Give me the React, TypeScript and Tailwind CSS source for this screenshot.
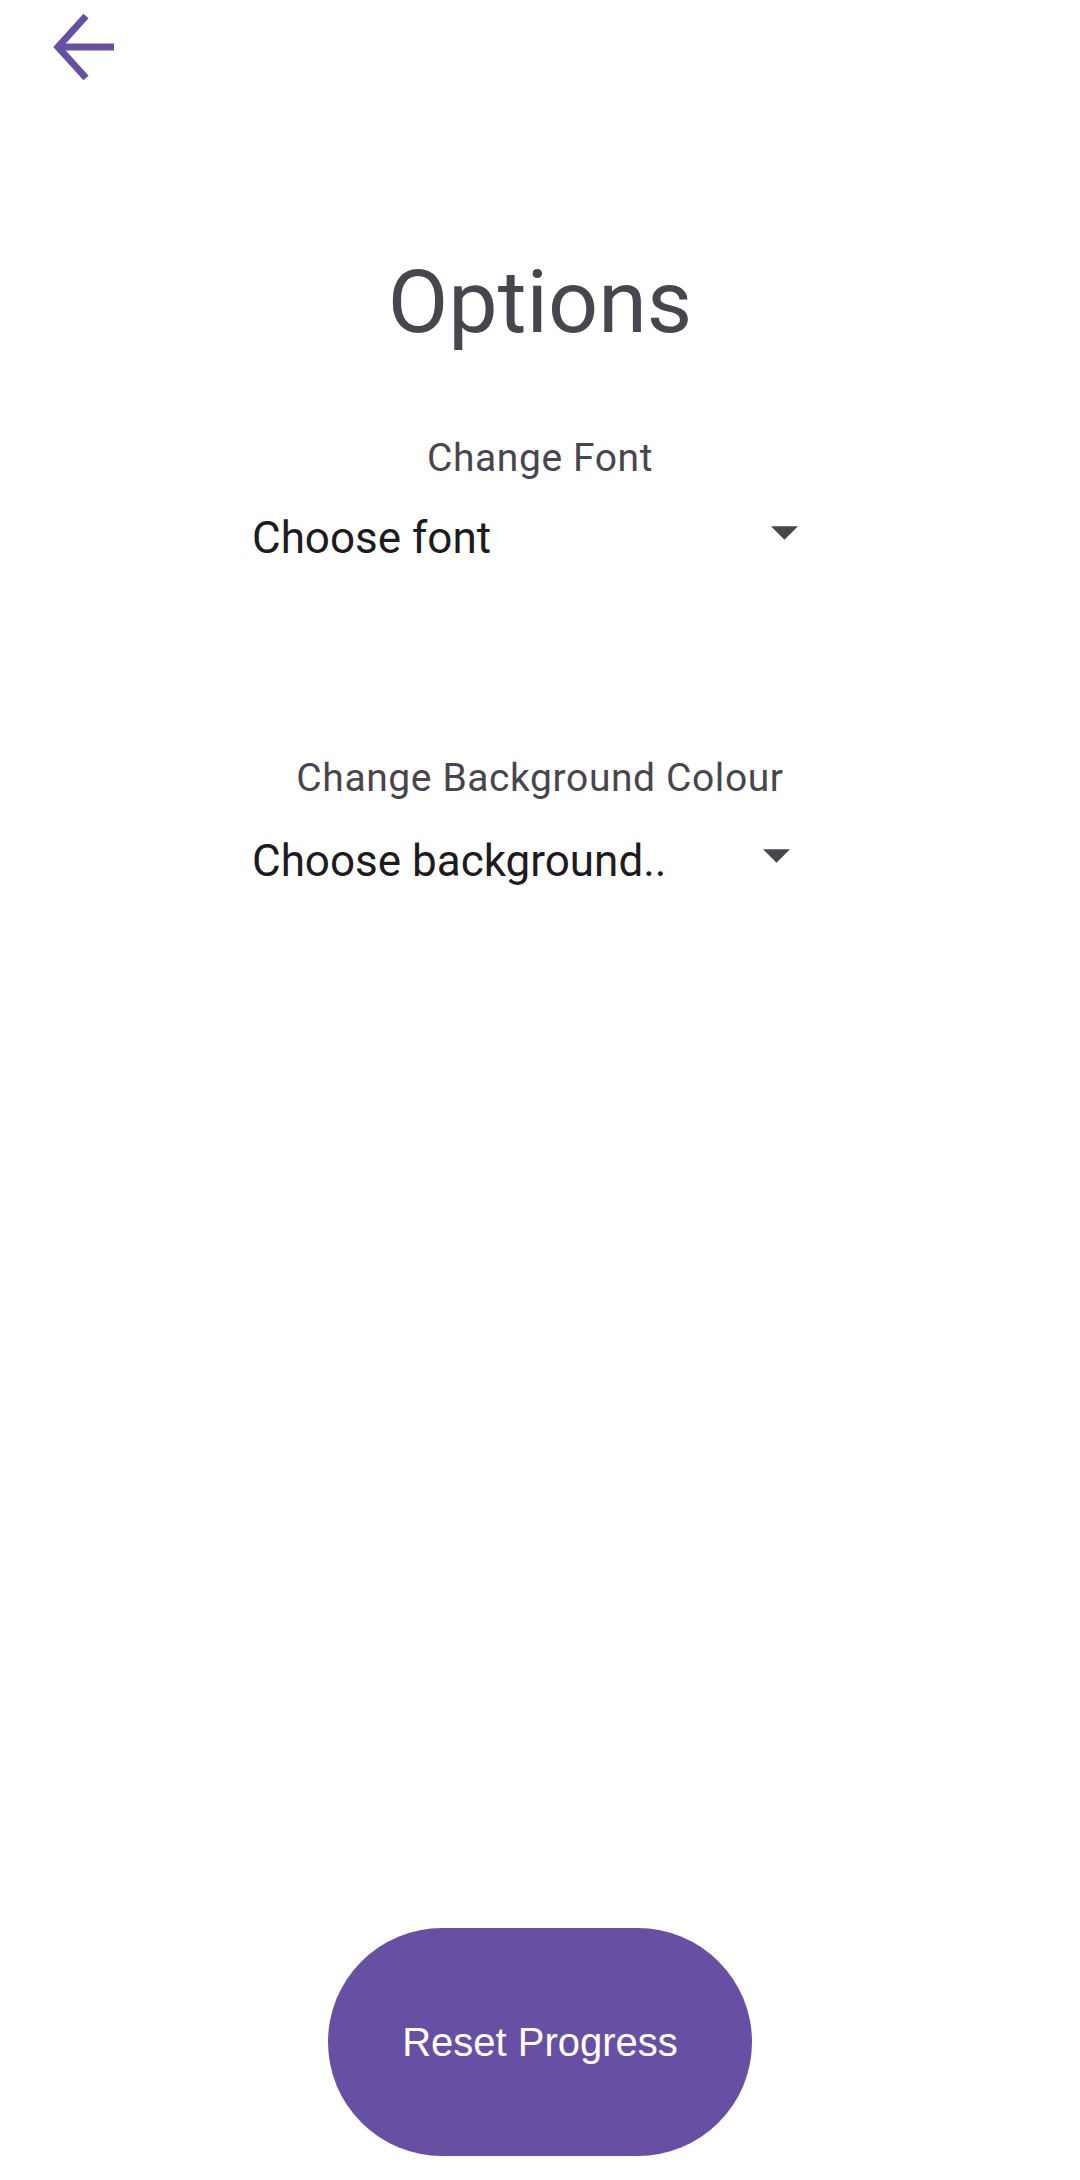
function BackArrow() {
  return (
    <svg width="76" height="78" viewBox="46 8 76 78" fill="none" stroke="#6750a4" strokeWidth="7" aria-hidden="true">
      <polyline points="86,16 58,47 86,78" strokeLinejoin="miter" />
      <line x1="58" y1="47" x2="114" y2="47" />
    </svg>
  )
}

function DropTriangle() {
  return (
    <svg width="27" height="14" viewBox="0 0 10 5" fill="#49454f" aria-hidden="true">
      <path d="M0 0l5 5 5-5z" />
    </svg>
  )
}

function Dropdown({ label, value, width, gap }: { label: string; value: string; width: string; gap: string }) {
  return (
    <div className="flex flex-col items-center">
      <div className="text-[39px] leading-none text-[#49454f] tracking-[0.6px]">{label}</div>
      <div className={`w-[576px] ${gap}`}>
        <div className={`flex items-start justify-between ${width}`}>
          <span className="text-[44px] leading-none text-[#1d1b20]">{value}</span>
          <span className="mt-[10px]">
            <DropTriangle />
          </span>
        </div>
      </div>
    </div>
  )
}

export default function App() {
  return (
    <div className="min-h-[2180px] w-[1080px] bg-white flex flex-col font-['Roboto',sans-serif]">
      <div className="ml-[46px] mt-[8px] h-[84px]">
        <BackArrow />
      </div>

      <h1 className="mt-[166px] text-center text-[88px] leading-none text-[#47464f]">Options</h1>

      <div className="mt-[93px]">
        <Dropdown label="Change Font" value="Choose font" width="w-[546px]" gap="mt-[38px]" />
      </div>

      <div className="mt-[199px]">
        <Dropdown label="Change Background Colour" value="Choose background.." width="w-[538px]" gap="mt-[41px]" />
      </div>

      <div className="mt-auto mb-[24px] flex justify-center">
        <button className="w-[424px] h-[228px] rounded-full bg-[#6750a4] text-white text-[40px] font-['Liberation_Sans',Arial,sans-serif]">
          Reset Progress
        </button>
      </div>
    </div>
  )
}
